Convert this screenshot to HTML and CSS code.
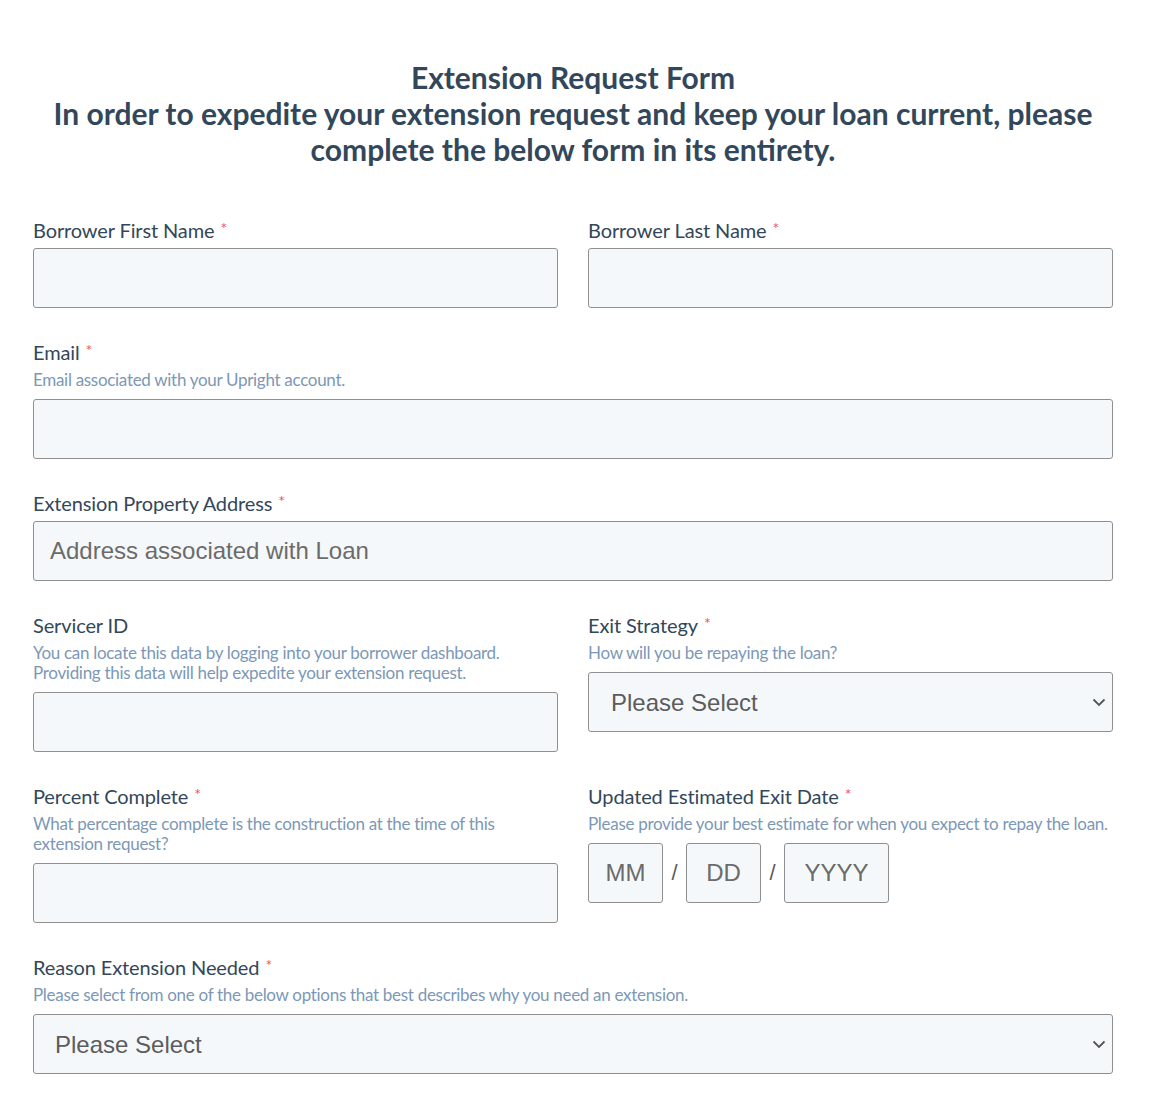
FILE: index.html
```html
<!DOCTYPE html>
<html lang="en">

<head>
  <title>Extension Request Form</title>
  <meta charset="utf-8">
  <link rel="stylesheet" href="styles.css">
</head>

<body>
  <div id="container">
    <h1 class="form-title">Extension Request Form<br>In order to expedite your extension request and keep your loan
      current, please complete the below form in its entirety.</h1>
    <form class="ext-form">
      <div class="row two">
        <div class="field">
          <label class="lbl">Borrower First Name<span class="req">*</span></label>
          <input type="text" class="inp">
        </div>
        <div class="field">
          <label class="lbl">Borrower Last Name<span class="req">*</span></label>
          <input type="text" class="inp">
        </div>
      </div>
      <div class="row">
        <div class="field">
          <label class="lbl">Email<span class="req">*</span></label>
          <div class="help">Email associated with your Upright account.</div>
          <input type="email" class="inp">
        </div>
      </div>
      <div class="row">
        <div class="field">
          <label class="lbl">Extension Property Address<span class="req">*</span></label>
          <input type="text" class="inp" placeholder="Address associated with Loan">
        </div>
      </div>
      <div class="row two">
        <div class="field">
          <label class="lbl">Servicer ID</label>
          <div class="help">You can locate this data by logging into your borrower dashboard.<br>Providing this data
            will help expedite your extension request.</div>
          <input type="text" class="inp">
        </div>
        <div class="field">
          <label class="lbl">Exit Strategy<span class="req">*</span></label>
          <div class="help">How will you be repaying the loan?</div>
          <div class="sel-wrap">
            <select class="inp sel">
              <option>Please Select</option>
            </select>
            <svg class="chev" width="14" height="9" viewBox="0 0 14 9">
              <path d="M1.5 1.5 L7 7 L12.5 1.5" fill="none" stroke="#555" stroke-width="1.8" />
            </svg>
          </div>
        </div>
      </div>
      <div class="row two">
        <div class="field">
          <label class="lbl">Percent Complete<span class="req">*</span></label>
          <div class="help">What percentage complete is the construction at the time of this extension request?</div>
          <input type="text" class="inp">
        </div>
        <div class="field">
          <label class="lbl">Updated Estimated Exit Date<span class="req">*</span></label>
          <div class="help">Please provide your best estimate for when you expect to repay the loan.</div>
          <div class="date">
            <input type="text" class="inp dpart" placeholder="MM">
            <span class="slash">/</span>
            <input type="text" class="inp dpart" placeholder="DD">
            <span class="slash">/</span>
            <input type="text" class="inp dpart year" placeholder="YYYY">
          </div>
        </div>
      </div>
      <div class="row">
        <div class="field">
          <label class="lbl">Reason Extension Needed<span class="req">*</span></label>
          <div class="help">Please select from one of the below options that best describes why you need an
            extension.</div>
          <div class="sel-wrap">
            <select class="inp sel wide">
              <option>Please Select</option>
            </select>
            <svg class="chev" width="14" height="9" viewBox="0 0 14 9">
              <path d="M1.5 1.5 L7 7 L12.5 1.5" fill="none" stroke="#555" stroke-width="1.8" />
            </svg>
          </div>
        </div>
      </div>
    </form>
  </div>
</body>

</html>
```

FILE: styles.css
```css
* {
  box-sizing: border-box;
}

body {
  margin: 0;
  background-color: white;
  font-family: Lato, "Liberation Sans", sans-serif;
  color: #33475b;
}

#container {
  width: 1080px;
  margin-left: 33px;
  padding-top: 59px;
}

.form-title {
  margin: 0;
  text-align: center;
  font-size: 30px;
  line-height: 36px;
  font-weight: 700;
  color: #33475b;
}

.ext-form {
  margin-top: 51px;
}

.row {
  margin-bottom: 32px;
}

/* two fields side by side */
.row.two {
  display: grid;
  grid-template-columns: 1fr 1fr;
  column-gap: 30px;
}

.lbl {
  display: block;
  font-size: 20px;
  line-height: 24px;
  letter-spacing: -0.12px;
  margin-bottom: 6px;
}

.req {
  color: #f2545b;
  font-size: 16px;
  vertical-align: top;
  margin-left: 6px;
  line-height: 20px;
}

.help {
  font-size: 17px;
  line-height: 20px;
  letter-spacing: -0.3px;
  color: #7c98b6;
  margin-top: 0;
  margin-bottom: 9px;
}

.inp {
  display: block;
  width: 100%;
  height: 60px;
  padding: 0 16px;
  background-color: #f5f8fa;
  border: 1px solid #8f8f8f;
  border-radius: 3px;
  font-family: "Liberation Sans", Arial, sans-serif;
  font-size: 24px;
  color: #5c5c5c;
}

.inp::placeholder {
  color: #6b6b6b;
}

.sel-wrap {
  position: relative;
}

.sel {
  appearance: none;
  padding-left: 22px;
}

.sel.wide {
  padding-left: 21px;
}

/* dropdown arrow sits over the select */
.chev {
  position: absolute;
  right: 7px;
  top: 26px;
  pointer-events: none;
}

.date {
  display: flex;
  align-items: center;
}

.dpart {
  width: 75px;
  text-align: center;
  padding: 0;
}

.dpart.year {
  width: 105px;
}

.slash {
  width: 23px;
  text-align: center;
  font-family: "Liberation Sans", Arial, sans-serif;
  font-size: 22px;
  color: #5c5c5c;
}
```
